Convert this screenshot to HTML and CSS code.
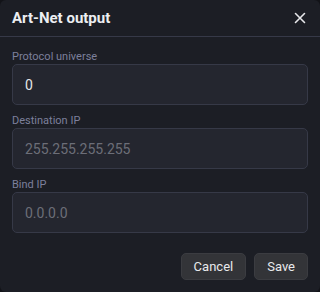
FILE: index.html
```html
<!DOCTYPE html>
<html>
<head>
<meta charset="utf-8">
<link rel="stylesheet" href="styles.css">
</head>
<body>
<div class="dialog">
  <div class="header">
    <h1 class="title">Art-Net output</h1>
    <button class="close" aria-label="Close">
      <svg width="12" height="12" viewBox="0 0 12 12"><path d="M1.5 1.5L10.5 10.5M10.5 1.5L1.5 10.5" stroke="#e6e7ea" stroke-width="1.6" stroke-linecap="round"/></svg>
    </button>
  </div>
  <div class="content">
    <label class="field">
      <span class="label">Protocol universe</span>
      <input class="input" type="text" value="0">
    </label>
    <label class="field">
      <span class="label">Destination IP</span>
      <input class="input" type="text" placeholder="255.255.255.255">
    </label>
    <label class="field">
      <span class="label">Bind IP</span>
      <input class="input" type="text" placeholder="0.0.0.0">
    </label>
    <div class="actions">
      <button class="btn">Cancel</button>
      <button class="btn">Save</button>
    </div>
  </div>
</div>
</body>
</html>
```
FILE: styles.css
```css
html, body {
  margin: 0;
  padding: 0;
  background: #121318;
}
body {
  font-family: Roboto, "Liberation Sans", sans-serif;
}
.dialog {
  width: 320px;
  height: 292px;
  box-sizing: border-box;
  background: #1c1e25;
  border-radius: 6px;
  overflow: hidden;
}
.header {
  height: 36px;
  display: flex;
  align-items: center;
  justify-content: space-between;
  padding: 0 12px;
  border-bottom: 1px solid #363948;
}
.title {
  margin: 0;
  font-size: 15px;
  font-weight: 700;
  color: #eceef2;
}
.close {
  background: none;
  border: 0;
  padding: 0;
  width: 20px;
  height: 20px;
  display: flex;
  align-items: center;
  justify-content: center;
  margin-right: -2px;
}
.content {
  padding: 12px 12px 12px;
  display: flex;
  flex-direction: column;
  gap: 8px;
}
.field {
  display: flex;
  flex-direction: column;
}
.label {
  font-size: 11px;
  line-height: 15px;
  color: #7c809c;
}
.input {
  box-sizing: border-box;
  height: 41px;
  width: 100%;
  background: #24262f;
  border: 1px solid #363947;
  border-radius: 5px;
  padding: 0 12px;
  font-family: inherit;
  font-size: 14px;
  color: #e4e5e8;
  outline: none;
}
.input::placeholder {
  color: #6c6e78;
}
.actions {
  display: flex;
  justify-content: flex-end;
  gap: 8px;
  margin-top: 12px;
}
.btn {
  height: 27px;
  padding: 0 12px;
  background: #333438;
  border: 1px solid #3b3c41;
  border-radius: 5px;
  color: #e8e9ec;
  font-family: inherit;
  font-size: 13px;
}
```
